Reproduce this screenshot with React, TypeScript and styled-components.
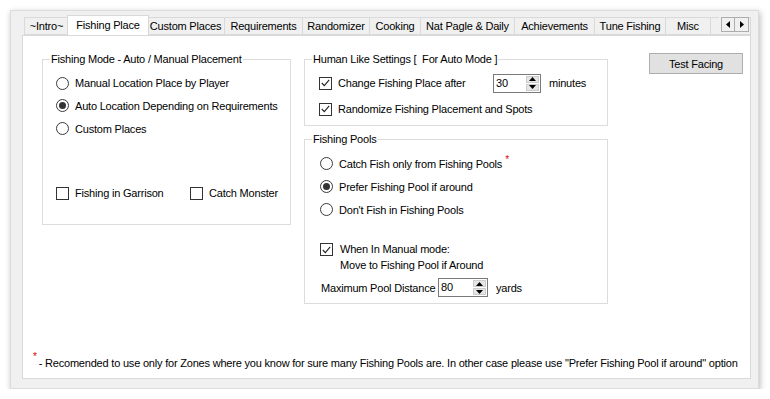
import * as React from "react";
import styled, { createGlobalStyle } from "styled-components";

const GlobalStyle = createGlobalStyle`
  html, body {
    margin: 0;
    padding: 0;
    background: #ffffff;
  }
  body {
    font-family: "Liberation Sans", Arial, sans-serif;
    font-size: 11px;
    letter-spacing: -0.2px;
    color: #000000;
  }
`;

const Window = styled.div`
  margin: 10px 0 0 10px;
  width: 749px;
  height: 379px;
  box-sizing: border-box;
  background: #f0f0f0;
  border: 1px solid #dcdcdc;
  box-shadow: 1px 2px 6px rgba(0, 0, 0, 0.28);
  padding: 4px 7px 0 11px;
`;

const TabStrip = styled.div`
  position: relative;
  display: flex;
  align-items: flex-end;
  height: 20px;
  padding-left: 2px;
  overflow: hidden;
`;

const Tab = styled.div<{ $w: number; $active?: boolean }>`
  flex: none;
  width: ${p => p.$w}px;
  height: ${p => (p.$active ? 21 : 18)}px;
  margin: ${p => (p.$active ? "0 -2px -1px -2px" : "0")};
  box-sizing: border-box;
  display: flex;
  align-items: center;
  justify-content: center;
  background: ${p => (p.$active ? "#ffffff" : "#f0f0f0")};
  border: 1px solid #d9d9d9;
  border-bottom: ${p => (p.$active ? "none" : "1px solid #d9d9d9")};
  border-left: ${p => (p.$active ? "1px solid #d9d9d9" : "none")};
  position: ${p => (p.$active ? "relative" : "static")};
  z-index: ${p => (p.$active ? 2 : 1)};
  padding-bottom: ${p => (p.$active ? 2 : 0)}px;
  white-space: nowrap;
  &:first-child {
    border-left: 1px solid #d9d9d9;
  }
`;

const ScrollArrows = styled.div`
  position: absolute;
  right: 2px;
  top: 2px;
  display: flex;
  background: #f0f0f0;
  padding-left: 2px;
  z-index: 3;
`;

const ArrowButton = styled.div`
  width: 14px;
  height: 15px;
  box-sizing: border-box;
  border: 1px solid #adadad;
  background: #f0f0f0;
  display: flex;
  align-items: center;
  justify-content: center;
  & + & {
    border-left: none;
  }
`;

const Panel = styled.div`
  position: relative;
  z-index: 1;
  height: 344px;
  box-sizing: border-box;
  background: #ffffff;
  border: 1px solid #d9d9d9;
  display: flex;
  flex-direction: column;
`;

const Main = styled.div`
  display: flex;
  align-items: flex-start;
  padding: 16px 0 0 19px;
`;

const Group = styled.fieldset<{ $w: number; $h: number }>`
  margin: 0;
  padding: 0;
  width: ${p => p.$w}px;
  height: ${p => p.$h}px;
  box-sizing: border-box;
  border: 1px solid #dcdcdc;
  min-width: 0;
`;

const GroupBody = styled.div<{ $pl: number; $pt: number }>`
  height: 100%;
  box-sizing: border-box;
  padding: ${p => p.$pt}px 0 0 ${p => p.$pl}px;
  display: flex;
  flex-direction: column;
`;

const Legend = styled.legend`
  margin-left: 7px;
  padding: 0 1px;
  line-height: 14px;
  white-space: nowrap;
`;

const RightColumn = styled.div`
  display: flex;
  flex-direction: column;
  gap: 6px;
  margin-left: 13px;
`;

const Row = styled.div<{ $h: number; $mt?: number }>`
  display: flex;
  align-items: center;
  height: ${p => p.$h}px;
  margin-top: ${p => p.$mt || 0}px;
  white-space: nowrap;
`;

const CheckRow = styled.div`
  display: grid;
  grid-template-columns: 134px auto;
  margin-top: auto;
  margin-bottom: 20px;
  height: 22px;
  align-items: center;
`;

const Option = styled.label<{ $gap: number }>`
  display: flex;
  align-items: center;
  gap: ${p => p.$gap}px;
  white-space: nowrap;
`;

const RadioCircle = styled.span<{ $on?: boolean }>`
  flex: none;
  width: 13px;
  height: 13px;
  box-sizing: border-box;
  border-radius: 50%;
  border: 1px solid #3a3a3a;
  background: #ffffff;
  display: flex;
  align-items: center;
  justify-content: center;
  &::after {
    content: "";
    display: ${p => (p.$on ? "block" : "none")};
    width: 7px;
    height: 7px;
    border-radius: 50%;
    background: #333333;
  }
`;

const Box = styled.span`
  flex: none;
  width: 13px;
  height: 13px;
  box-sizing: border-box;
  border: 1px solid #333333;
  background: #ffffff;
  display: flex;
  align-items: center;
  justify-content: center;
`;

const FieldLabel = styled.span<{ $w?: number }>`
  display: inline-block;
  width: ${p => (p.$w ? `${p.$w}px` : "auto")};
  white-space: nowrap;
`;

const Spin = styled.div<{ $w: number }>`
  display: flex;
  width: ${p => p.$w}px;
  height: 19px;
  box-sizing: border-box;
  border: 1px solid #7a7a7a;
  background: #ffffff;
  margin-right: 8px;
`;

const SpinValue = styled.span`
  flex: 1;
  padding-left: 2px;
  line-height: 17px;
`;

const SpinButtons = styled.div`
  width: 14px;
  display: flex;
  flex-direction: column;
  gap: 1px;
  padding: 1px 1px 1px 0;
  box-sizing: border-box;
`;

const SpinButton = styled.div`
  flex: 1;
  background: #e5e5e5;
  border: 1px solid #cccccc;
  display: flex;
  align-items: center;
  justify-content: center;
`;

const Star = styled.span`
  color: #e00000;
  font-size: 10px;
  position: relative;
  top: -5px;
  margin-left: 3px;
`;

const TwoLine = styled.div`
  display: flex;
  align-items: flex-start;
  gap: 7px;
  margin-top: 20px;
  line-height: 16px;
`;

const CheckHolder = styled.span`
  padding-top: 2px;
`;

const DistanceRow = styled.div`
  display: flex;
  align-items: center;
  height: 19px;
  margin-top: 5px;
  margin-left: 1px;
`;

const Button = styled.div`
  flex: none;
  width: 94px;
  height: 21px;
  box-sizing: border-box;
  margin: 1px 0 0 41px;
  background: #e1e1e1;
  border: 1px solid #adadad;
  display: flex;
  align-items: center;
  justify-content: center;
`;

const Footer = styled.div`
  margin-top: auto;
  padding: 0 0 7px 10px;
  white-space: nowrap;
  line-height: 14px;
`;

const FootStar = styled.span`
  color: #e00000;
  font-size: 10px;
  position: relative;
  top: -7px;
  margin-right: 2px;
`;

const Check = () => (
  <Box>
    <svg width="9" height="8" viewBox="0 0 9 8">
      <polyline points="0.8,4 3.3,6.6 8.2,0.8" fill="none" stroke="#222" strokeWidth="1.1" />
    </svg>
  </Box>
);

const Triangle = ({ dir }: { dir: "up" | "down" | "left" | "right" }) => {
  const pts = {
    up: "0,4 3.5,0 7,4",
    down: "0,0 3.5,4 7,0",
    left: "4,0 0,3.5 4,7",
    right: "0,0 4,3.5 0,7",
  }[dir];
  const vertical = dir === "up" || dir === "down";
  return (
    <svg width={vertical ? 7 : 4} height={vertical ? 4 : 7} viewBox={vertical ? "0 0 7 4" : "0 0 4 7"}>
      <polygon points={pts} fill="#000" />
    </svg>
  );
};

const SpinBox = ({ value, width }: { value: string; width: number }) => (
  <Spin $w={width}>
    <SpinValue>{value}</SpinValue>
    <SpinButtons>
      <SpinButton>
        <Triangle dir="up" />
      </SpinButton>
      <SpinButton>
        <Triangle dir="down" />
      </SpinButton>
    </SpinButtons>
  </Spin>
);

const tabs = [
  { label: "~Intro~", w: 45 },
  { label: "Fishing Place", w: 82 },
  { label: "Custom Places", w: 78 },
  { label: "Requirements", w: 78 },
  { label: "Randomizer", w: 67 },
  { label: "Cooking", w: 51 },
  { label: "Nat Pagle & Daily", w: 94 },
  { label: "Achievements", w: 80 },
  { label: "Tune Fishing", w: 71 },
  { label: "Misc", w: 45 },
  { label: "Log", w: 40 },
];

export default function App() {
  return (
    <>
      <GlobalStyle />
      <Window>
        <TabStrip>
          {tabs.map(t => (
            <Tab key={t.label} $w={t.w} $active={t.label === "Fishing Place"}>
              {t.label}
            </Tab>
          ))}
          <ScrollArrows>
            <ArrowButton>
              <Triangle dir="left" />
            </ArrowButton>
            <ArrowButton>
              <Triangle dir="right" />
            </ArrowButton>
          </ScrollArrows>
        </TabStrip>
        <Panel>
          <Main>
            <Group $w={249} $h={173}>
              <Legend>Fishing Mode - Auto / Manual Placement</Legend>
              <GroupBody $pl={13} $pt={6}>
                <Row $h={22}>
                  <Option $gap={6}>
                    <RadioCircle />
                    Manual Location Place by Player
                  </Option>
                </Row>
                <Row $h={23}>
                  <Option $gap={6}>
                    <RadioCircle $on />
                    Auto Location Depending on Requirements
                  </Option>
                </Row>
                <Row $h={23}>
                  <Option $gap={6}>
                    <RadioCircle />
                    Custom Places
                  </Option>
                </Row>
                <CheckRow>
                  <Option $gap={6}>
                    <Box />
                    Fishing in Garrison
                  </Option>
                  <Option $gap={6}>
                    <Box />
                    Catch Monster
                  </Option>
                </CheckRow>
              </GroupBody>
            </Group>
            <RightColumn>
              <Group $w={304} $h={74}>
                <Legend>Human Like Settings [&nbsp; For Auto Mode ]</Legend>
                <GroupBody $pl={14} $pt={5}>
                  <Row $h={24}>
                    <Option $gap={6}>
                      <Check />
                      <FieldLabel $w={155}>Change Fishing Place after</FieldLabel>
                    </Option>
                    <SpinBox value="30" width={48} />
                    minutes
                  </Row>
                  <Row $h={22} $mt={3}>
                    <Option $gap={6}>
                      <Check />
                      Randomize Fishing Placement and Spots
                    </Option>
                  </Row>
                </GroupBody>
              </Group>
              <Group $w={304} $h={172}>
                <Legend>Fishing Pools</Legend>
                <GroupBody $pl={15} $pt={6}>
                  <Row $h={23}>
                    <Option $gap={6}>
                      <RadioCircle />
                      <span>
                        Catch Fish only from Fishing Pools
                        <Star>*</Star>
                      </span>
                    </Option>
                  </Row>
                  <Row $h={23}>
                    <Option $gap={6}>
                      <RadioCircle $on />
                      Prefer Fishing Pool if around
                    </Option>
                  </Row>
                  <Row $h={23}>
                    <Option $gap={6}>
                      <RadioCircle />
                      Don't Fish in Fishing Pools
                    </Option>
                  </Row>
                  <TwoLine>
                    <CheckHolder>
                      <Check />
                    </CheckHolder>
                    <span>
                      When In Manual mode:
                      <br />
                      Move to Fishing Pool if Around
                    </span>
                  </TwoLine>
                  <DistanceRow>
                    <FieldLabel $w={117}>Maximum Pool Distance</FieldLabel>
                    <SpinBox value="80" width={50} />
                    yards
                  </DistanceRow>
                </GroupBody>
              </Group>
            </RightColumn>
            <Button>Test Facing</Button>
          </Main>
          <Footer>
            <FootStar>*</FootStar>- Recomended to use only for Zones where you know for sure many Fishing Pools are. In other case please use "Prefer Fishing Pool if around" option
          </Footer>
        </Panel>
      </Window>
    </>
  );
}
